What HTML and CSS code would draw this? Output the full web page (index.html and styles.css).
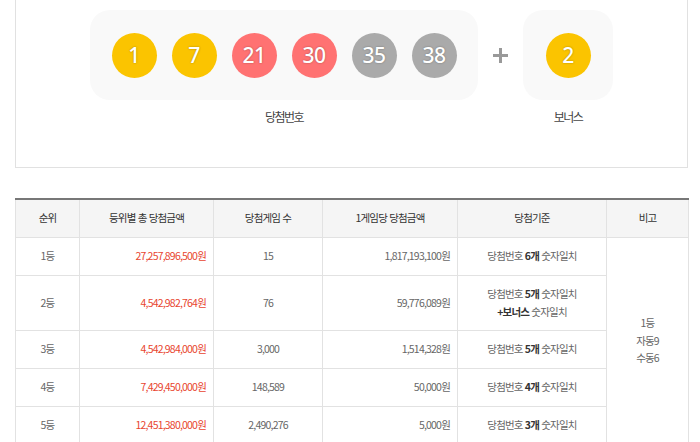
FILE: index.html
```html
<!DOCTYPE html>
<html lang="ko">
<head>
<meta charset="utf-8">
<title>당첨결과</title>
<link rel="stylesheet" href="styles.css">
</head>
<body>
<div class="page">
  <section class="result-card">
    <div class="draw">
      <div class="group">
        <div class="panel">
          <span class="ball yellow">1</span>
          <span class="ball yellow">7</span>
          <span class="ball red">21</span>
          <span class="ball red">30</span>
          <span class="ball gray">35</span>
          <span class="ball gray">38</span>
        </div>
        <p class="label">당첨번호</p>
      </div>
      <div class="plus">
        <svg width="15" height="15" viewBox="0 0 15 15"><rect x="6" y="0" width="3" height="15" fill="#999"/><rect x="0" y="6" width="15" height="3" fill="#999"/></svg>
      </div>
      <div class="group">
        <div class="panel">
          <span class="ball yellow">2</span>
        </div>
        <p class="label">보너스</p>
      </div>
    </div>
  </section>

  <table class="prize">
    <colgroup>
      <col class="c1"><col class="c2"><col class="c3"><col class="c4"><col class="c5"><col class="c6">
    </colgroup>
    <thead>
      <tr><th>순위</th><th>등위별 총 당첨금액</th><th>당첨게임 수</th><th>1게임당 당첨금액</th><th>당첨기준</th><th>비고</th></tr>
    </thead>
    <tbody>
      <tr>
        <td>1등</td><td class="amt red-txt">27,257,896,500원</td><td>15</td><td class="amt">1,817,193,100원</td><td>당첨번호 <strong>6개</strong> 숫자일치</td>
        <td rowspan="5" class="note">1등<br>자동9<br>수동6</td>
      </tr>
      <tr>
        <td>2등</td><td class="amt red-txt">4,542,982,764원</td><td>76</td><td class="amt">59,776,089원</td><td>당첨번호 <strong>5개</strong> 숫자일치<br><strong>+보너스</strong> 숫자일치</td>
      </tr>
      <tr>
        <td>3등</td><td class="amt red-txt">4,542,984,000원</td><td>3,000</td><td class="amt">1,514,328원</td><td>당첨번호 <strong>5개</strong> 숫자일치</td>
      </tr>
      <tr>
        <td>4등</td><td class="amt red-txt">7,429,450,000원</td><td>148,589</td><td class="amt">50,000원</td><td>당첨번호 <strong>4개</strong> 숫자일치</td>
      </tr>
      <tr>
        <td>5등</td><td class="amt red-txt">12,451,380,000원</td><td>2,490,276</td><td class="amt">5,000원</td><td>당첨번호 <strong>3개</strong> 숫자일치</td>
      </tr>
    </tbody>
  </table>
</div>
</body>
</html>
```

FILE: styles.css
```css
* { box-sizing: border-box; }
html, body { margin: 0; padding: 0; background: #fff; }
body {
  font-family: "Noto Sans CJK KR", "Noto Sans", sans-serif;
  color: #666;
}
.page {
  width: 673px;
  margin-left: 15px;
}
.result-card {
  border: 1px solid #e1e1e1;
  border-top: 0;
  padding: 10px 0 41px;
}
.draw {
  display: flex;
  justify-content: center;
  align-items: flex-start;
}
.group {
  display: flex;
  flex-direction: column;
  align-items: center;
}
.panel {
  display: flex;
  gap: 15px;
  padding: 22.5px 21.5px;
  background: #f9f9f9;
  border-radius: 20px;
}
.group + .plus + .group .panel { padding: 22.5px; }
.ball {
  width: 45px;
  height: 45px;
  border-radius: 50%;
  display: flex;
  align-items: center;
  justify-content: center;
  color: #fff;
  font-family: "Noto Sans", "Noto Sans CJK KR", sans-serif;
  font-size: 21px;
  font-weight: 500;
  text-shadow: 0 0 2px rgba(0,0,0,0.35);
  letter-spacing: -0.5px;
}
.yellow { background: #fbc400; }
.red { background: #ff7272; }
.gray { background: #aaa; }
.plus {
  width: 45px;
  height: 90px;
  display: flex;
  align-items: center;
  justify-content: center;
}
.plus svg { display: block; }
.label {
  margin: 8px 0 0;
  font-size: 12px;
  line-height: 18px;
  letter-spacing: -1.5px;
  color: #444;
}
.prize {
  margin-top: 30px;
  width: 673px;
  border-collapse: collapse;
  table-layout: fixed;
  font-size: 10.5px;
  letter-spacing: -0.8px;
  line-height: 18px;
  border-top: 2px solid #777;
}
.c1 { width: 64px; }
.c2 { width: 134px; }
.c3 { width: 109px; }
.c4 { width: 135px; }
.c5 { width: 149px; }
.c6 { width: 82px; }
.prize th, .prize td {
  border: 1px solid #e2e2e2;
  text-align: center;
  vertical-align: middle;
  padding: 9px 7px;
  height: 38px;
  font-weight: 400;
}
.prize th {
  background: #f5f5f5;
  color: #333;
}
.prize th { border-top: 2px solid #777; }
.prize td { color: #666; }
.prize td.amt { text-align: right; }
.prize td.red-txt { color: #e8452f; }
.prize strong { color: #333; font-weight: 700; }
.prize td.note { line-height: 17.5px; }
```
